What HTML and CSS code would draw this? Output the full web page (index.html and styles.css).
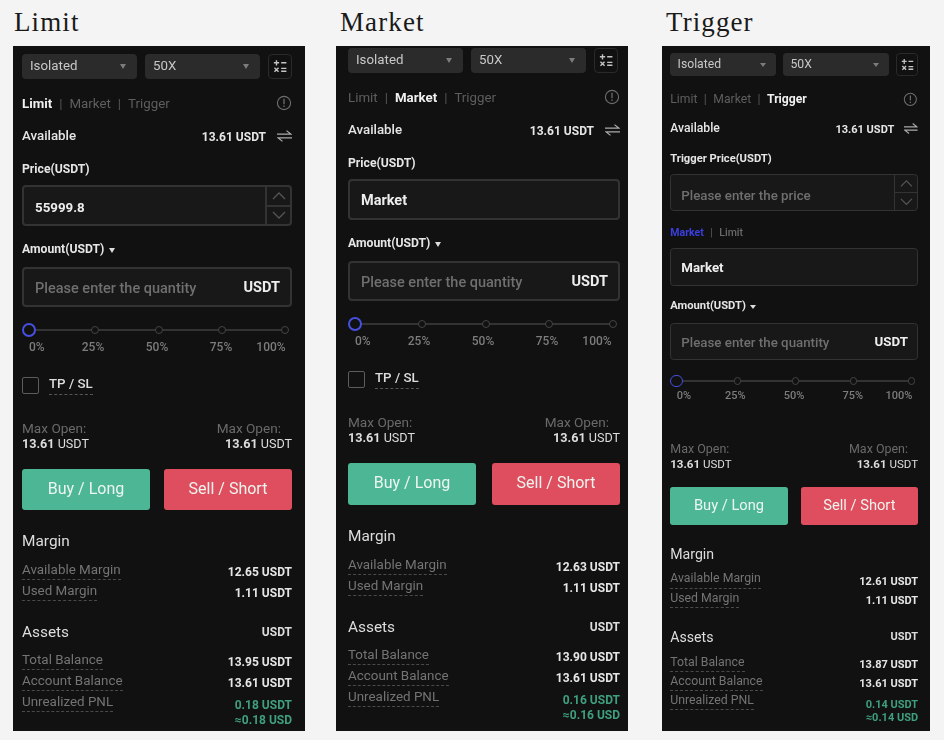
FILE: index.html
```html
<!DOCTYPE html>
<html lang="en">
<head>
<meta charset="UTF-8" />
<title>Order Types</title>
<link rel="stylesheet" href="styles.css">
</head>
<body>
<svg class="defs" width="0" height="0">
  <symbol id="i-calc" viewBox="0 0 24 24">
    <path d="M6 2v9M1.5 6.5h9M14 6.5h9M2.5 15l7 7M9.500 15l-7 7M14 16h9M14 21h9" fill="none" stroke="currentColor" stroke-width="2.4"/>
  </symbol>
  <symbol id="i-info" viewBox="0 0 16 16">
    <circle cx="8" cy="8" r="6.6" fill="none" stroke="currentColor" stroke-width="1.1"/>
    <path d="M8 3.8v5.4M8 10.6v1.5" fill="none" stroke="currentColor" stroke-width="1.3"/>
  </symbol>
  <symbol id="i-swap" viewBox="0 0 15 12">
    <path d="M0 4.2h14L9.500.6M15 7.800H1l4.500 3.600" fill="none" stroke="currentColor" stroke-width="1.2"/>
  </symbol>
  <symbol id="i-up" viewBox="0 0 14 8"><path d="M1 7l6-6 6 6" fill="none" stroke="currentColor" stroke-width="1.3"/></symbol>
  <symbol id="i-down" viewBox="0 0 14 8"><path d="M1 1l6 6 6-6" fill="none" stroke="currentColor" stroke-width="1.3"/></symbol>
</svg>

<section class="col col-limit">
  <h2>Limit</h2>
  <div class="panel">
    <div class="selects">
      <div class="select">Isolated</div>
      <div class="select">50X</div>
      <div class="calc"><svg><use href="#i-calc"/></svg></div>
    </div>
    <div class="tabs">
      <span class="on">Limit</span><i>|</i><span>Market</span><i>|</i><span>Trigger</span>
      <svg class="info"><use href="#i-info"/></svg>
    </div>
    <div class="avail">
      <span>Available</span><b>13.61 USDT</b><svg class="swap"><use href="#i-swap"/></svg>
    </div>
    <div class="label">Price(USDT)</div>
    <div class="field stepper">
      <span class="val num">55999.8</span>
      <div class="steps"><div><svg><use href="#i-up"/></svg></div><div><svg><use href="#i-down"/></svg></div></div>
    </div>
    <div class="label amount">Amount(USDT) <em></em></div>
    <div class="field qty"><span class="ph">Please enter the quantity</span><b>USDT</b></div>
    <div class="slider"><u class="knob"></u><u></u><u></u><u></u><u></u></div>
    <div class="marks"><span>0%</span><span>25%</span><span>50%</span><span>75%</span><span>100%</span></div>
    <div class="tpsl"><div class="check"></div><span>TP / SL</span></div>
    <div class="maxopen">
      <div><p>Max Open:</p><span><b>13.61</b> USDT</span></div>
      <div class="right"><p>Max Open:</p><span><b>13.61</b> USDT</span></div>
    </div>
    <div class="btns"><div class="btn buy">Buy / Long</div><div class="btn sell">Sell / Short</div></div>
    <div class="head">Margin</div>
    <div class="rows">
      <div class="row"><span>Available Margin</span><b>12.65 USDT</b></div>
      <div class="row"><span>Used Margin</span><b>1.11 USDT</b></div>
    </div>
    <div class="head">Assets<b>USDT</b></div>
    <div class="rows">
      <div class="row"><span>Total Balance</span><b>13.95 USDT</b></div>
      <div class="row"><span>Account Balance</span><b>13.61 USDT</b></div>
      <div class="row pnl"><span>Unrealized PNL</span><b>0.18 USDT<br>≈0.18 USD</b></div>
    </div>
  </div>
</section>

<section class="col col-market">
  <h2>Market</h2>
  <div class="panel">
    <div class="selects">
      <div class="select">Isolated</div>
      <div class="select">50X</div>
      <div class="calc"><svg><use href="#i-calc"/></svg></div>
    </div>
    <div class="tabs">
      <span>Limit</span><i>|</i><span class="on">Market</span><i>|</i><span>Trigger</span>
      <svg class="info"><use href="#i-info"/></svg>
    </div>
    <div class="avail">
      <span>Available</span><b>13.61 USDT</b><svg class="swap"><use href="#i-swap"/></svg>
    </div>
    <div class="label">Price(USDT)</div>
    <div class="field"><span class="val">Market</span></div>
    <div class="label amount">Amount(USDT) <em></em></div>
    <div class="field qty"><span class="ph">Please enter the quantity</span><b>USDT</b></div>
    <div class="slider"><u class="knob"></u><u></u><u></u><u></u><u></u></div>
    <div class="marks"><span>0%</span><span>25%</span><span>50%</span><span>75%</span><span>100%</span></div>
    <div class="tpsl"><div class="check"></div><span>TP / SL</span></div>
    <div class="maxopen">
      <div><p>Max Open:</p><span><b>13.61</b> USDT</span></div>
      <div class="right"><p>Max Open:</p><span><b>13.61</b> USDT</span></div>
    </div>
    <div class="btns"><div class="btn buy">Buy / Long</div><div class="btn sell">Sell / Short</div></div>
    <div class="head">Margin</div>
    <div class="rows">
      <div class="row"><span>Available Margin</span><b>12.63 USDT</b></div>
      <div class="row"><span>Used Margin</span><b>1.11 USDT</b></div>
    </div>
    <div class="head">Assets<b>USDT</b></div>
    <div class="rows">
      <div class="row"><span>Total Balance</span><b>13.90 USDT</b></div>
      <div class="row"><span>Account Balance</span><b>13.61 USDT</b></div>
      <div class="row pnl"><span>Unrealized PNL</span><b>0.16 USDT<br>≈0.16 USD</b></div>
    </div>
  </div>
</section>

<section class="col col-trigger">
  <h2>Trigger</h2>
  <div class="panel">
    <div class="selects">
      <div class="select">Isolated</div>
      <div class="select">50X</div>
      <div class="calc"><svg><use href="#i-calc"/></svg></div>
    </div>
    <div class="tabs">
      <span>Limit</span><i>|</i><span>Market</span><i>|</i><span class="on">Trigger</span>
      <svg class="info"><use href="#i-info"/></svg>
    </div>
    <div class="avail">
      <span>Available</span><b>13.61 USDT</b><svg class="swap"><use href="#i-swap"/></svg>
    </div>
    <div class="label">Trigger Price(USDT)</div>
    <div class="field stepper">
      <span class="ph">Please enter the price</span>
      <div class="steps"><div><svg><use href="#i-up"/></svg></div><div><svg><use href="#i-down"/></svg></div></div>
    </div>
    <div class="subtabs"><span class="blue">Market</span><i>|</i><span>Limit</span></div>
    <div class="field sub"><span class="val">Market</span></div>
    <div class="label amount">Amount(USDT) <em></em></div>
    <div class="field qty"><span class="ph">Please enter the quantity</span><b>USDT</b></div>
    <div class="slider"><u class="knob"></u><u></u><u></u><u></u><u></u></div>
    <div class="marks"><span>0%</span><span>25%</span><span>50%</span><span>75%</span><span>100%</span></div>
    <div class="maxopen">
      <div><p>Max Open:</p><span><b>13.61</b> USDT</span></div>
      <div class="right"><p>Max Open:</p><span><b>13.61</b> USDT</span></div>
    </div>
    <div class="btns"><div class="btn buy">Buy / Long</div><div class="btn sell">Sell / Short</div></div>
    <div class="head">Margin</div>
    <div class="rows">
      <div class="row"><span>Available Margin</span><b>12.61 USDT</b></div>
      <div class="row"><span>Used Margin</span><b>1.11 USDT</b></div>
    </div>
    <div class="head">Assets<b>USDT</b></div>
    <div class="rows">
      <div class="row"><span>Total Balance</span><b>13.87 USDT</b></div>
      <div class="row"><span>Account Balance</span><b>13.61 USDT</b></div>
      <div class="row pnl"><span>Unrealized PNL</span><b>0.14 USDT<br>≈0.14 USD</b></div>
    </div>
  </div>
</section>
</body>
</html>
```

FILE: styles.css
```css
* {
  box-sizing: border-box;
}

body {
  margin: 0;
  height: 740px;
  overflow: hidden;
  background: #f4f4f4;
  display: flex;
  padding-left: 13px;
  font-family: Roboto, "Liberation Sans", sans-serif;
}

.defs {
  position: absolute;
}

.col-limit,
.col-market {
  width: 292px;
}

.col-limit {
  margin-right: 31px;
}

.col-market {
  margin-right: 34px;
}

.col-trigger {
  width: 268px;
}

h2 {
  margin: 0 0 0 1px;
  height: 46px;
  padding-top: 6px;
  font-family: "Liberation Serif", serif;
  font-weight: 400;
  font-size: 27px;
  line-height: 32px;
  letter-spacing: 1.1px;
  color: #1a1a1a;
}

.col-market h2,
.col-trigger h2 {
  margin-left: 4px;
}

.panel {
  height: 685px;
  padding: 8px 13px 0 9px;
  background: #111;
  color: #e6e6e6;
  font-size: 13.3px;
  overflow: hidden;
  filter: blur(0.4px);
}

.col-market .panel {
  padding: 2px 8px 0 12px;
}

/* third shot is the same widget at a smaller scale */
.col-trigger .panel {
  zoom: 0.918;
  width: 292px;
  height: 746px;
}

.selects {
  display: flex;
  gap: 8px;
  height: 25px;
}

.select {
  position: relative;
  width: 115px;
  padding-left: 8px;
  background: #2b2b2b;
  border-radius: 4px;
  line-height: 24px;
  color: #c8c8c8;
}

.select::after {
  content: "";
  position: absolute;
  right: 11px;
  top: 10px;
  border: 3.5px solid transparent;
  border-top: 5px solid #7c7c7c;
}

.calc {
  width: 24px;
  border: 1px solid #2a2a2a;
  border-radius: 4px;
  color: #c4c4c4;
  padding: 4px;
}

.calc svg {
  display: block;
  width: 14px;
  height: 14px;
}

.tabs {
  display: flex;
  align-items: center;
  height: 18px;
  margin-top: 15px;
  color: #5e5e5e;
}

.col-trigger .tabs {
  margin-top: 16px;
}

.tabs i,
.subtabs i {
  margin: 0 7px;
  font-style: normal;
  color: #555;
}

.tabs .on {
  color: #f0f0f0;
  font-weight: 700;
}

.info {
  width: 16px;
  height: 16px;
  margin-left: auto;
  color: #6e6e6e;
}

.avail {
  display: flex;
  align-items: center;
  height: 18px;
  margin-top: 15px;
  font-weight: 500;
}

.col-trigger .avail {
  margin-top: 14px;
}

.avail span {
  margin-top: -1px;
}

.avail b {
  margin: 2px 11px 0 auto;
  font-size: 12px;
}

.swap {
  width: 15px;
  height: 12px;
  color: #aaa;
}

.label {
  height: 16px;
  margin-top: 16px;
  font-size: 12.2px;
  font-weight: 700;
  line-height: 16px;
}

.label.amount {
  margin-top: 15px;
}

.label em {
  display: inline-block;
  margin-left: 2px;
  border: 3.5px solid transparent;
  border-top: 5px solid #ddd;
  vertical-align: -3px;
}

.field {
  display: flex;
  align-items: center;
  justify-content: space-between;
  height: 41px;
  margin-top: 8px;
  padding-left: 11px;
  background: #181818;
  border: 2px solid #333;
  border-radius: 4px;
}

.field.qty {
  height: 40px;
  margin-top: 10px;
  padding-right: 10px;
}

.field .val {
  margin-top: 2px;
  font-weight: 700;
  font-size: 14.5px;
  color: #eee;
}

.field .num {
  margin-top: 3px;
  font-size: 13.3px;
}

.field .ph {
  margin-top: 2px;
  font-weight: 500;
  font-size: 14.5px;
  color: #6f6f6f;
}

.stepper .ph {
  margin-top: 6px;
}

.field b {
  font-size: 14.5px;
  color: #eee;
}

.steps {
  width: 25px;
  height: 100%;
  border-left: 2px solid #333;
  display: flex;
  flex-direction: column;
}

.steps div {
  flex: 1;
  display: flex;
  align-items: center;
  justify-content: center;
  color: #555;
}

.steps div + div {
  border-top: 2px solid #333;
}

.steps svg {
  width: 14px;
  height: 8px;
}

.subtabs {
  height: 16px;
  margin-top: 16px;
  font-size: 11.5px;
  line-height: 16px;
  color: #6a6a6a;
  font-weight: 500;
}

.subtabs .blue {
  color: #3a3fe0;
  font-weight: 700;
}

.field.sub {
  margin-top: 8px;
}

.slider {
  position: relative;
  display: flex;
  justify-content: space-between;
  align-items: center;
  height: 16px;
  margin-top: 15px;
  padding-right: 3px;
}

.slider::before {
  content: "";
  position: absolute;
  left: 6px;
  right: 6px;
  top: 7px;
  height: 2px;
  background: #333;
}

.slider u {
  position: relative;
  width: 8px;
  height: 8px;
  background: #111;
  border: 1.5px solid #444;
  border-radius: 50%;
}

.slider .knob {
  width: 14px;
  height: 14px;
  border: 2px solid #4650e0;
}

.marks {
  display: grid;
  grid-template-columns: 39px 64px 64px 64px 36px;
  text-align: center;
  height: 14px;
  margin-top: 2px;
  font-size: 12px;
  line-height: 14px;
  font-weight: 500;
  color: #7c7c7c;
}

.marks span:first-child {
  padding-left: 7px;
  text-align: left;
}

.tpsl {
  display: flex;
  align-items: flex-start;
  gap: 10px;
  height: 17px;
  margin-top: 23px;
}

.check {
  width: 17px;
  height: 17px;
  border: 1.5px solid #5c5c5c;
  border-radius: 2px;
}

.tpsl span {
  margin-top: -1px;
  padding-bottom: 3px;
  border-bottom: 1px dashed #555;
  font-weight: 500;
  line-height: 15px;
  color: #ddd;
}

.maxopen {
  display: flex;
  justify-content: space-between;
  margin-top: 26px;
  font-size: 12.6px;
  line-height: 16px;
  color: #ddd;
}

.maxopen p {
  margin: 0;
  font-size: 13.6px;
  color: #6a6a6a;
}

.maxopen span {
  display: block;
}

.maxopen .right {
  text-align: right;
}

.maxopen .right p {
  margin-right: 11px;
}

.col-trigger .maxopen {
  margin-top: 43px;
}

.btns {
  display: flex;
  justify-content: space-between;
  margin-top: 17px;
}

.btn {
  width: 128px;
  height: 41px;
  border-radius: 3px;
  text-align: center;
  line-height: 40px;
  font-size: 16px;
  color: #eef5f0;
}

.col-market .btn {
  height: 42px;
}

.buy {
  background: #4db795;
}

.sell {
  background: #df4e5e;
}

.head {
  display: flex;
  justify-content: space-between;
  align-items: center;
  height: 18px;
  margin-top: 22px;
  font-size: 15.4px;
  color: #ddd;
}

.head b {
  font-size: 12px;
}

.rows {
  margin-top: 8.5px;
}

.row {
  display: flex;
  justify-content: space-between;
  align-items: flex-start;
  height: 21px;
}

.row span {
  padding: 1px 0 0;
  border-bottom: 1px dashed #4a4a4a;
  font-size: 13.4px;
  line-height: 19px;
  color: #747474;
}

.row b {
  margin-top: 6px;
  font-size: 12px;
  line-height: 15px;
  text-align: right;
  color: #e6e6e6;
}

.pnl b {
  margin-top: 7px;
  color: #3f9f7f;
}
```
